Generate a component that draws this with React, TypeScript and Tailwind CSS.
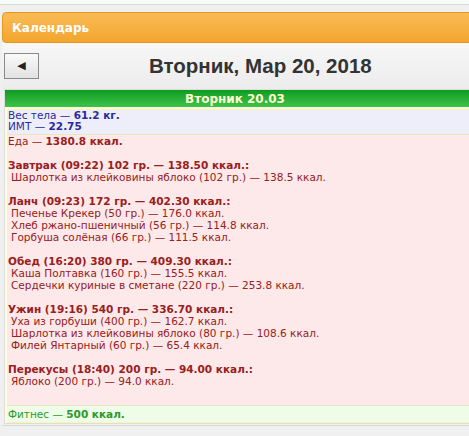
export default function App() {
  const f = { fontFamily: '"DejaVu Sans", Verdana, sans-serif' };
  const Meal = ({ h, items }: { h: string; items: string[] }) => (
    <div className="mt-[12px]">
      <div className="font-bold">{h}</div>
      {items.map((i) => (
        <div key={i} className="pl-[3px]">{i}</div>
      ))}
    </div>
  );
  return (
    <div className="w-[469px] h-[436px] overflow-hidden bg-[#f0f0f0]" style={f}>
      <div className="h-[5px] bg-[#f7fbf7] border-b border-[#d8d8d8]" />
      <div className="w-[480px] pl-[2px] pt-[7px]">
        <div className="h-[31px] rounded-[4px] border border-[#e39a1c] bg-gradient-to-b from-[#f9bb55] to-[#f3a52c] flex items-center pl-[9px] text-white font-bold text-[12px]">
          Календарь
        </div>
        <div className="flex items-center h-[46px] bg-gradient-to-b from-[#f7f7f7] to-[#ececec]">
          <div className="ml-[2px] w-[35px] h-[26px] border border-[#8a8a8a] bg-gradient-to-b from-[#fafafa] to-[#e2e2e2] flex items-center justify-center text-[11px] text-[#222]">◀</div>
          <div className="ml-[110px] text-[20.5px] font-bold text-[#333]" style={{ fontFamily: '"Liberation Sans", Arial, sans-serif' }}>
            Вторник, Мар 20, 2018
          </div>
        </div>
        <div className="ml-[2px] border border-[#ddd] bg-[#ffffe0] text-[10.5px] leading-[12px]">
          <div className="h-[17px] bg-gradient-to-b from-[#0a9c1e] to-[#3cc34a] text-[#ffffd0] font-bold text-[12px] flex items-center justify-center pr-[14px]">
            Вторник 20.03
          </div>
          <div className="ml-[2px] mt-[2px] border-y border-[#fbf7b0]">
            <div className="bg-[#eeeefa] text-[#2a2a9e] pl-[1px] pb-[2px] border-b border-[#e8e8c0] leading-[11px]">
              <div>Вес тела — <b>61.2 кг.</b></div>
              <div>ИМТ — <b>22.75</b></div>
            </div>
            <div className="bg-[#fde9e9] text-[#982020] pl-[1px] pb-[18px] border-b border-[#e8e8c0]">
              <div>Еда — <b>1380.8 ккал.</b></div>
              <Meal h="Завтрак (09:22) 102 гр. — 138.50 ккал.:" items={["Шарлотка из клейковины яблоко (102 гр.) — 138.5 ккал."]} />
              <Meal h="Ланч (09:23) 172 гр. — 402.30 ккал.:" items={["Печенье Крекер (50 гр.) — 176.0 ккал.", "Хлеб ржано-пшеничный (56 гр.) — 114.8 ккал.", "Горбуша солёная (66 гр.) — 111.5 ккал."]} />
              <Meal h="Обед (16:20) 380 гр. — 409.30 ккал.:" items={["Каша Полтавка (160 гр.) — 155.5 ккал.", "Сердечки куриные в сметане (220 гр.) — 253.8 ккал."]} />
              <Meal h="Ужин (19:16) 540 гр. — 336.70 ккал.:" items={["Уха из горбуши (400 гр.) — 162.7 ккал.", "Шарлотка из клейковины яблоко (80 гр.) — 108.6 ккал.", "Филей Янтарный (60 гр.) — 65.4 ккал."]} />
              <Meal h="Перекусы (18:40) 200 гр. — 94.00 ккал.:" items={["Яблоко (200 гр.) — 94.0 ккал."]} />
            </div>
            <div className="bg-[#eefce8] text-[#2a9a2a] pl-[1px] py-[2px]">
              Фитнес — <b>500 ккал.</b>
            </div>
          </div>
        </div>
        <div className="mt-[1px] border-t border-[#d8d8d8]" />
      </div>
    </div>
  );
}
